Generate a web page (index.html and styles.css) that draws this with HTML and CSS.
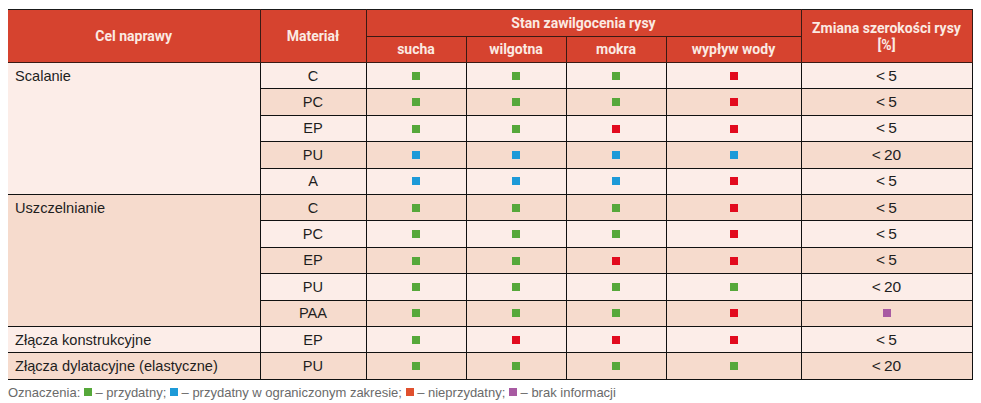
FILE: index.html
```html
<!DOCTYPE html>
<html lang="pl">
<head>
<meta charset="utf-8">
<link rel="stylesheet" href="styles.css">
</head>
<body>
<table class="tbl">
  <colgroup>
    <col class="c1"><col class="c2"><col class="c3"><col class="c3"><col class="c3"><col class="c4"><col class="c5">
  </colgroup>
  <thead>
    <tr class="h1">
      <th rowspan="2">Cel naprawy</th>
      <th rowspan="2">Materiał</th>
      <th colspan="4">Stan zawilgocenia rysy</th>
      <th rowspan="2" class="zm">Zmiana szerokości rysy<br>[%]</th>
    </tr>
    <tr class="h2">
      <th>sucha</th><th>wilgotna</th><th>mokra</th><th>wypływ wody</th>
    </tr>
  </thead>
  <tbody>
    <tr class="l"><td rowspan="5" class="grp l">Scalanie</td><td>C</td><td><i class="g"></i></td><td><i class="g"></i></td><td><i class="g"></i></td><td><i class="r"></i></td><td class="v">&lt;&#8201;5</td></tr>
    <tr class="d"><td>PC</td><td><i class="g"></i></td><td><i class="g"></i></td><td><i class="g"></i></td><td><i class="r"></i></td><td class="v">&lt;&#8201;5</td></tr>
    <tr class="l"><td>EP</td><td><i class="g"></i></td><td><i class="g"></i></td><td><i class="r"></i></td><td><i class="r"></i></td><td class="v">&lt;&#8201;5</td></tr>
    <tr class="d"><td>PU</td><td><i class="b"></i></td><td><i class="b"></i></td><td><i class="b"></i></td><td><i class="b"></i></td><td class="v">&lt;&#8201;20</td></tr>
    <tr class="l"><td>A</td><td><i class="b"></i></td><td><i class="b"></i></td><td><i class="b"></i></td><td><i class="r"></i></td><td class="v">&lt;&#8201;5</td></tr>
    <tr class="d"><td rowspan="5" class="grp d">Uszczelnianie</td><td>C</td><td><i class="g"></i></td><td><i class="g"></i></td><td><i class="g"></i></td><td><i class="r"></i></td><td class="v">&lt;&#8201;5</td></tr>
    <tr class="l"><td>PC</td><td><i class="g"></i></td><td><i class="g"></i></td><td><i class="g"></i></td><td><i class="r"></i></td><td class="v">&lt;&#8201;5</td></tr>
    <tr class="d"><td>EP</td><td><i class="g"></i></td><td><i class="g"></i></td><td><i class="r"></i></td><td><i class="r"></i></td><td class="v">&lt;&#8201;5</td></tr>
    <tr class="l"><td>PU</td><td><i class="g"></i></td><td><i class="g"></i></td><td><i class="g"></i></td><td><i class="g"></i></td><td class="v">&lt;&#8201;20</td></tr>
    <tr class="d"><td>PAA</td><td><i class="g"></i></td><td><i class="g"></i></td><td><i class="g"></i></td><td><i class="r"></i></td><td class="v"><i class="p"></i></td></tr>
    <tr class="l"><td class="grp l">Złącza konstrukcyjne</td><td>EP</td><td><i class="g"></i></td><td><i class="r"></i></td><td><i class="r"></i></td><td><i class="r"></i></td><td class="v">&lt;&#8201;5</td></tr>
    <tr class="d"><td class="grp d">Złącza dylatacyjne (elastyczne)</td><td>PU</td><td><i class="g"></i></td><td><i class="g"></i></td><td><i class="g"></i></td><td><i class="g"></i></td><td class="v">&lt;&#8201;20</td></tr>
  </tbody>
</table>
<p class="legend">Oznaczenia: <i class="g"></i> – przydatny; <i class="b"></i> – przydatny w ograniczonym zakresie; <i class="o"></i> – nieprzydatny; <i class="p"></i> – brak informacji</p>
</body>
</html>
```
FILE: styles.css
```css
html, body {
  margin: 0;
  background: #ffffff;
}
body {
  padding: 9px 9px 0 8px;
  font-family: "Liberation Sans", Arial, sans-serif;
}
.tbl {
  border-collapse: collapse;
  table-layout: fixed;
  width: 964px;
  font-size: 14.6px;
  line-height: 16px;
  color: #1e1e1e;
}
.c1 { width: 252px; }
.c2 { width: 106px; }
.c3 { width: 100px; }
.c4 { width: 135px; }
.c5 { width: 171px; }
.tbl th {
  background: #d6432f;
  color: #fbeae3;
  font-family: Roboto, "Liberation Sans", sans-serif;
  font-weight: 700;
  font-size: 14px;
  border: 1px solid #3a1a14;
  padding: 0;
  line-height: 17px;
}
.tbl thead tr:first-child th { border-top: 1px solid #1a1a1a; }
.tbl thead tr:first-child th:first-child { border-left: none; }
.h1 { height: 27px; }
.h2 { height: 26px; }
.tbl th.zm { padding-top: 2px; }
.tbl tbody tr { height: 26.4px; }
.tbl td {
  border: 1px solid #111111;
  text-align: center;
  padding: 0;
}
.tbl td.v { font-size: 15.5px; }
.tbl td:first-child { border-left: none; }
.tbl tr.l td { background: #fcede8; }
.tbl tr.d td { background: #f6dbcd; }
.tbl td.grp {
  text-align: left;
  vertical-align: top;
  padding: 5px 7px 0;
  border-left: none;
}
.tbl td.grp.l { background: #fcede8; }
.tbl td.grp.d { background: #f6dbcd; }
i {
  display: inline-block;
  width: 8px;
  height: 8px;
  vertical-align: middle;
  position: relative;
  top: -1px;
}
i.g { background: #56a83a; }
i.r { background: #e20a1e; }
i.b { background: #1d9ad8; }
i.p { background: #a85aa2; }
i.o { background: #e0502e; }
.legend {
  margin: 5px 0 0 0;
  font-size: 13px;
  line-height: 15px;
  color: #6a6a6a;
}
.legend i { top: -1px; }
```
